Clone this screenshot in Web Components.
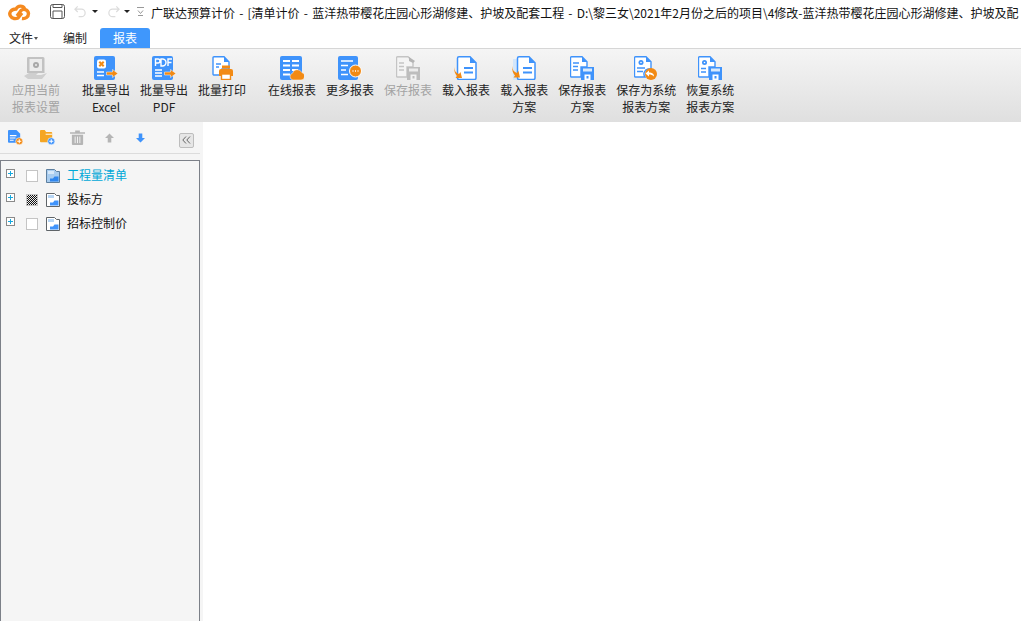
<!DOCTYPE html>
<html>
<head>
<meta charset="utf-8">
<title>广联达预算计价</title>
<style>
  html, body { margin: 0; height: 100%; overflow: hidden; background: #fff; }
  body { font: 12px "Noto Sans CJK SC", "Liberation Sans", sans-serif; color: #222; }
  app-shell { height: 100vh; }
</style>
</head>
<body>
<template id="icons">
  <svg data-name="settings" viewBox="0 0 24 24"><path d="M4 1h15a1.500 1.500 0 0 1 1.500 1.500V17H3V2.500A1.500 1.500 0 0 1 4 1z" fill="#c2c2c2"/><rect x="5.500" y="3" width="12.500" height="12" fill="#ececec"/><circle cx="12" cy="9" r="3" fill="#a8a8a8"/><circle cx="12" cy="9" r="1" fill="#ececec"/><path d="M0 20l5-3h9l-2 2h5l6-2-5 6H4z" fill="#cfcfcf"/></svg>
  <svg data-name="excel" viewBox="0 0 24 24"><rect x="0" y="0" width="21" height="24" rx="2" fill="#3f93fb"/><rect x="3" y="3.500" width="9" height="9" rx="2" fill="#fff"/><path d="M5.300 5.800l4.400 4.400m0-4.400l-4.400 4.400" stroke="#f28a14" stroke-width="2"/><path d="M3 16h7M3 19.500h7" stroke="#fff" stroke-width="1.500"/><path d="M12.500 16h6v-2.500l5.500 4-5.500 4V19h-6z" fill="#f28a14" stroke="#fff" stroke-width=".5"/></svg>
  <svg data-name="pdf" viewBox="0 0 24 24"><rect x="0" y="0" width="21" height="24" rx="2" fill="#3f93fb"/><path d="M3 14h7M3 17h7M3 20h7" stroke="#fff" stroke-width="1.500"/><path d="M3.500 10V3h2.500a1.800 1.800 0 0 1 0 4H3.500M9 3v7h1.500a3 3 0 0 0 0-7zM16 10V3h4M16 6.500h3.500" fill="none" stroke="#fff" stroke-width="1.400"/><path d="M12.500 16h6v-2.500l5.500 4-5.500 4V19h-6z" fill="#f28a14" stroke="#fff" stroke-width=".5"/></svg>
  <svg data-name="print" viewBox="0 0 24 24"><path d="M4 .7h10l5 5.300V13h-7v6H4a1 1 0 0 1-1-1V1.700a1 1 0 0 1 1-1z" fill="#fff" stroke="#3f93fb" stroke-width="1.400"/><path d="M14 .5v5.500h5.500z" fill="#3f93fb"/><path d="M6 8h5M6 11h3" stroke="#3f93fb" stroke-width="1.500"/><rect x="12" y="9.500" width="8" height="3" fill="#f28a14"/><path d="M9 15a2 2 0 0 1 2-2h10a2 2 0 0 1 2 2v5H9z" fill="#f28a14"/><rect x="11.500" y="18" width="9" height="5.500" fill="#fff" stroke="#f28a14" stroke-width="1.400"/></svg>
  <svg data-name="online" viewBox="0 0 24 24"><rect x="0" y="0" width="22" height="24" rx="2" fill="#3f93fb"/><path d="M3 5h7m2 0h7M3 9.500h7m2 0h7M3 14h7m2 0h6M3 18.500h7" stroke="#fff" stroke-width="1.800"/><path d="M13 24a3.500 3.500 0 0 1-.5-6.800 5 5 0 0 1 9.300-.7A3.800 3.800 0 0 1 21 24z" fill="#f28a14" stroke="#fff" stroke-width=".5"/></svg>
  <svg data-name="more" viewBox="0 0 24 24"><rect x="0" y="0" width="20" height="24" rx="2" fill="#3f93fb"/><path d="M3 5h12M3 9.500h7M3 14h5M3 18.500h7" stroke="#fff" stroke-width="1.700"/><circle cx="17.500" cy="15" r="6" fill="#f28a14" stroke="#fff" stroke-width="1"/><path d="M14.500 15h1m1.500 0h1m1.500 0h1" stroke="#fff" stroke-width="1.500"/></svg>
  <svg data-name="savegrey" viewBox="0 0 24 24"><path d="M1.500.7H12l5 5V11h-6v10H1.500a1 1 0 0 1-1-1V1.700a1 1 0 0 1 1-1z" fill="#f4f4f4" stroke="#c4c4c4" stroke-width="1.400"/><path d="M3 7h5M3 10.500h5M3 14h5" stroke="#c4c4c4" stroke-width="1.400"/><path d="M13 1l6 4-2 2-4-2z" fill="#b4b4b4"/><rect x="11" y="11" width="13" height="13" fill="#bdbdbd"/><rect x="13" y="12.500" width="9" height="3" fill="#ececec"/><rect x="14.500" y="18.500" width="6" height="5.500" fill="#f2f2f2"/><rect x="16.500" y="20" width="2" height="2.500" fill="#bdbdbd"/></svg>
  <svg data-name="load" viewBox="0 0 24 24"><path d="M5 .8h11l6 6V22a1.500 1.500 0 0 1-1.500 1.500H5A1.500 1.500 0 0 1 3.500 22V2.300A1.500 1.500 0 0 1 5 .8z" fill="#fff" stroke="#3f93fb" stroke-width="1.500"/><path d="M16 .5v6.500h6.500z" fill="#3f93fb"/><path d="M10 12h9M10 16.500h9" stroke="#3f93fb" stroke-width="1.800"/><path d="M0 11c.5 4 2 6 5 7l1.500-2L8 22H1.500l1.500-2C1 18 0 15 0 11z" fill="#f28a14"/></svg>
  <svg data-name="loadscheme" viewBox="0 0 24 24"><rect x="1" y="3" width="15" height="21" fill="#d3e6fb"/><path d="M7 .8h10l6 6V22a1.500 1.500 0 0 1-1.500 1.500H7A1.500 1.500 0 0 1 5.500 22V2.300A1.500 1.500 0 0 1 7 .8z" fill="#fff" stroke="#3f93fb" stroke-width="1.500"/><path d="M17 .5v6.500h6z" fill="#3f93fb"/><path d="M11 12h9M11 16.500h9" stroke="#3f93fb" stroke-width="1.800"/><path d="M0 10c.5 4 2 6 5 7l1.500-2L8 21.500H1.500l1.500-2C1 17.500 0 14.500 0 10z" fill="#f28a14"/></svg>
  <svg data-name="savescheme" viewBox="0 0 24 24"><path d="M1.500.7H12l5 5V11h-6v10H1.500a1 1 0 0 1-1-1V1.700a1 1 0 0 1 1-1z" fill="#fff" stroke="#3f93fb" stroke-width="1.400"/><path d="M12 .5v5.500h5z" fill="#3f93fb"/><path d="M3 7h6M3 10.500h5M3 14h5" stroke="#3f93fb" stroke-width="1.400"/><rect x="11" y="11" width="13" height="13" fill="#3f93fb"/><rect x="13" y="12.500" width="9" height="3" fill="#d9eafc"/><rect x="14.500" y="18.500" width="6" height="5.500" fill="#fff"/><rect x="16.500" y="20" width="2" height="2.500" fill="#3f93fb"/></svg>
  <svg data-name="savesystem" viewBox="0 0 24 24"><path d="M1.500.7H12l5 5V13h-3a5 5 0 0 0-3 8H1.500a1 1 0 0 1-1-1V1.700a1 1 0 0 1 1-1z" fill="#fff" stroke="#3f93fb" stroke-width="1.400"/><path d="M12 .5v5.500h5z" fill="#3f93fb"/><circle cx="7" cy="6.500" r="2.500" fill="#3f93fb"/><circle cx="7" cy="6.500" r=".8" fill="#fff"/><path d="M3 12h8M3 15.500h6" stroke="#3f93fb" stroke-width="1.300"/><circle cx="17" cy="18" r="6" fill="#f28a14"/><path d="M20 20.500c0-3-2-4-5-4v-2l-3.500 3 3.500 3v-2c2 0 3.500 .5 5 2z" fill="#fff"/></svg>
  <svg data-name="restore" viewBox="0 0 24 24"><path d="M1.500.7H12l5 5V11h-6v10H1.500a1 1 0 0 1-1-1V1.700a1 1 0 0 1 1-1z" fill="#fff" stroke="#3f93fb" stroke-width="1.400"/><path d="M12 .5v5.500h5z" fill="#3f93fb"/><circle cx="6.500" cy="6.500" r="2.500" fill="#3f93fb"/><circle cx="6.500" cy="6.500" r=".8" fill="#fff"/><path d="M3 12.500h5M3 16h5" stroke="#3f93fb" stroke-width="1.300"/><rect x="11" y="11" width="13" height="13" fill="#3f93fb"/><rect x="13" y="12.500" width="9" height="3" fill="#d9eafc"/><rect x="14.500" y="18.500" width="6" height="5.500" fill="#fff"/><rect x="16.500" y="20" width="2" height="2.500" fill="#3f93fb"/></svg>
  <svg data-name="addfile" viewBox="0 0 16 16"><path d="M0 1a1 1 0 0 1 1-1h8l4 4v8.500a1 1 0 0 1-1 1H1a1 1 0 0 1-1-1z" fill="#3f93fb"/><path d="M2 6h7M2 8.500h6M2 11h4" stroke="#fff" stroke-width="1.100"/><circle cx="12" cy="12" r="3.800" fill="#f28a14" stroke="#fff" stroke-width=".6"/><path d="M12 9.800v4.400M9.800 12h4.400" stroke="#fff" stroke-width="1.100"/></svg>
  <svg data-name="addfolder" viewBox="0 0 16 16"><path d="M0 1a1 1 0 0 1 1-1h4l1.500 2H12a1 1 0 0 1 1 1v10H1a1 1 0 0 1-1-1z" fill="#f5a623"/><path d="M6 4.500h7" stroke="#fff" stroke-width="1"/><circle cx="12" cy="12" r="3.800" fill="#3f93fb" stroke="#fff" stroke-width=".6"/><path d="M12 9.800v4.400M9.800 12h4.400" stroke="#fff" stroke-width="1.100"/></svg>
  <svg data-name="trash" viewBox="0 0 16 16"><path d="M0 2.500h16V4H0zM5.500 2.500V.5h5v2z" fill="#b5b5b5"/><path d="M2 5h12v10a1 1 0 0 1-1 1H3a1 1 0 0 1-1-1z" fill="#b5b5b5"/><path d="M5.500 7v7M8 7v7M10.500 7v7" stroke="#f4f4f4" stroke-width="1"/></svg>
  <svg data-name="up" viewBox="0 0 10 10"><path d="M5 0l5 5H7v5H3V5H0z" fill="#b5b5b5"/></svg>
  <svg data-name="down" viewBox="0 0 10 10"><path d="M5 10L0 5h3V0h4v5h3z" fill="#3f93fb"/></svg>
  <svg data-name="node" viewBox="0 0 14 14"><path d="M.5.500h8l2 2h3v11H.5z" fill="#fff" stroke="#5f6468"/><rect x="2" y="2" width="6" height="3" fill="#b7d6f5"/><path d="M4 12.500V9.500h3l1.500-2h4v5z" fill="#3f93fb"/></svg>
  <svg data-name="nodeactive" viewBox="0 0 14 14"><path d="M.5.500h8l2 2h3v11H.5z" fill="#a9cdf0" stroke="#5d7f9f"/><rect x="2" y="2" width="6" height="3" fill="#d6e8f9"/><path d="M4 12.500V9.500h3l1.500-2h4v5z" fill="#2f86ee"/></svg>
</template>

<script>
function iconMarkup(name, size) {
	const tpl = document.getElementById('icons');
	const svg = tpl.content.querySelector(`svg[data-name="${name}"]`).cloneNode(true);
	if (size) {
		svg.setAttribute('width', size[0]);
		svg.setAttribute('height', size[1]);
	}
	return svg.outerHTML;
}

class AppShell extends HTMLElement {
	constructor() {
		super();
		this.attachShadow({ mode: 'open' });
		this.shadowRoot.innerHTML = `
      <style>
        :host { display: flex; flex-direction: column; overflow: hidden; }
        .work { flex: 1; display: flex; min-height: 0; }
        .main { flex: 1; background: #fff; }
      </style>
      <title-bar></title-bar>
      <tab-strip></tab-strip>
      <report-ribbon></report-ribbon>
      <div class="work">
        <side-panel></side-panel>
        <div class="main"></div>
      </div>
    `;
	}
}

class TitleBar extends HTMLElement {
	constructor() {
		super();
		this.attachShadow({ mode: 'open' });
		this.shadowRoot.innerHTML = `
      <style>
        :host { display: flex; align-items: center; height: 26px; background: #fff; overflow: hidden; white-space: nowrap; }
        .logo { width: 23px; height: 17px; margin: 0 0 2px 8px; flex: none; }
        .quick { display: flex; align-items: center; margin: 0 0 3px 19px; flex: none; }
        .quick svg { display: block; flex: none; }
        .caret { width: 0; height: 0; border: 3px solid transparent; border-top: 3px solid #222; border-bottom: 0; flex: none; }
        .title { margin-left: 7px; font-size: 12px; line-height: 26px; color: #111; flex: none; word-spacing: 1.5px; }
      </style>
      <svg class="logo" viewBox="0 0 23 17" fill="none" stroke="#f58a1f" stroke-width="3.400">
        <path d="M16.500 4.500C15 1.500 10 1 8 5 3 5 .5 9 2.500 12 4 15 8 15 10 14l4-5"/>
        <path d="M9 12l4-5.500c2-2 7-1.500 7.500 3 0 3.500-3 5.500-6.500 5"/>
      </svg>
      <div class="quick">
        <svg width="15" height="15" viewBox="0 0 15 15" fill="none" stroke="#555"><path d="M2.500 .5h10a2 2 0 0 1 2 2v10a2 2 0 0 1-2 2h-10a2 2 0 0 1-2-2v-10a2 2 0 0 1 2-2zM3 .5v3h9v-3M3 14.500V7h9v7.500"/></svg>
        <svg style="margin-left:9px" width="13" height="13" viewBox="0 0 14 13" fill="none" stroke="#dcdcdc" stroke-width="1.300"><path d="M4 1L1 4l3 3M1 4h7a4 4 0 0 1 0 8H5"/></svg>
        <span class="caret" style="margin-left:5px"></span>
        <svg style="margin-left:9px" width="13" height="13" viewBox="0 0 14 13" fill="none" stroke="#dcdcdc" stroke-width="1.300"><path d="M10 1l3 3-3 3M13 4H6a4 4 0 0 0 0 8h3"/></svg>
        <span class="caret" style="margin-left:4px"></span>
        <svg style="margin-left:7px" width="7" height="9" viewBox="0 0 7 9" fill="none" stroke="#999"><path d="M0 .5h7M1 3.500l2.500 3 2.500-3M1 8.500h5"/></svg>
      </div>
      <span class="title">广联达预算计价 - [清单计价 - 蓝洋热带樱花庄园心形湖修建、护坡及配套工程 - D:\\黎三女\\2021年2月份之后的项目\\4修改-蓝洋热带樱花庄园心形湖修建、护坡及配</span>
    `;
	}
}

class TabStrip extends HTMLElement {
	constructor() {
		super();
		this.attachShadow({ mode: 'open' });
		this.shadowRoot.innerHTML = `
      <style>
        :host { display: flex; align-items: flex-end; height: 22px; background: #fff; padding-left: 9px; box-sizing: border-box; }
        .tab { height: 20px; line-height: 20px; font-size: 12px; color: #222; }
        .file { display: flex; align-items: center; width: 30px; }
        .file i { width: 0; height: 0; border: 2.500px solid transparent; border-top: 3px solid #555; border-bottom: 0; margin-left: 1px; }
        .edit { margin-left: 24px; width: 24px; }
        .on { margin-left: 13px; width: 50px; text-align: center; background: #3f97fc; color: #fff; border-radius: 3px 3px 0 0; }
      </style>
      <div class="tab file">文件<i></i></div>
      <div class="tab edit">编制</div>
      <div class="tab on">报表</div>
    `;
	}
}

class ReportRibbon extends HTMLElement {
	constructor() {
		super();
		this.attachShadow({ mode: 'open' });
		this.shadowRoot.innerHTML = `
      <style>
        :host { display: flex; height: 74px; padding-left: 7px; box-sizing: border-box; border-top: 1px solid #d6d6d6;
          background: linear-gradient(#f5f5f5, #dfdfdf); }
        .group { display: flex; }
        .group + .group { margin-left: 12px; }
      </style>
      <div class="group">
        <ribbon-button icon="settings" disabled>应用当前<br>报表设置</ribbon-button>
      </div>
      <div class="group">
        <ribbon-button icon="excel">批量导出<br>Excel</ribbon-button>
        <ribbon-button icon="pdf">批量导出<br>PDF</ribbon-button>
        <ribbon-button icon="print">批量打印</ribbon-button>
      </div>
      <div class="group">
        <ribbon-button icon="online">在线报表</ribbon-button>
        <ribbon-button icon="more">更多报表</ribbon-button>
        <ribbon-button icon="savegrey" disabled>保存报表</ribbon-button>
        <ribbon-button icon="load">载入报表</ribbon-button>
        <ribbon-button icon="loadscheme">载入报表<br>方案</ribbon-button>
        <ribbon-button icon="savescheme">保存报表<br>方案</ribbon-button>
        <ribbon-button icon="savesystem">保存为系统<br>报表方案</ribbon-button>
        <ribbon-button icon="restore">恢复系统<br>报表方案</ribbon-button>
      </div>
    `;
	}
}

class RibbonButton extends HTMLElement {
	constructor() {
		super();
		this.attachShadow({ mode: 'open' });
		this.shadowRoot.innerHTML = `
      <style>
        :host { display: flex; flex-direction: column; align-items: center; padding: 7px 5px 0; font-size: 12px; line-height: 17px; color: #222; text-align: center; white-space: nowrap; }
        :host([disabled]) { color: #a3a3a3; }
        .icon { width: 24px; height: 24px; margin-bottom: 1px; }
        .icon svg { display: block; width: 24px; height: 24px; }
      </style>
      <div class="icon">${iconMarkup(this.getAttribute('icon'))}</div>
      <div><slot></slot></div>
    `;
	}
}

class SidePanel extends HTMLElement {
	constructor() {
		super();
		this.attachShadow({ mode: 'open' });
		this.shadowRoot.innerHTML = `
      <style>
        :host { display: flex; flex-direction: column; width: 203px; flex: none; background: #f5f5f5; }
        .tools { display: flex; align-items: center; height: 31px; margin-right: 3px; border-bottom: 1px solid #dcdcdc; flex: none; }
        .tools svg { display: block; flex: none; }
        .collapse { margin: 5px 0 0 34px; width: 13px; height: 13px; border: 1px solid #bdbdbd; border-radius: 2px; background: #e6e6e6; display: flex; align-items: center; justify-content: center; }
        .tree { flex: 1; width: 200px; box-sizing: border-box; border: 1px solid #7c8088; border-bottom: 0; margin-top: 6px; padding-top: 1px; }
      </style>
      <div class="tools">
        <span style="margin-left:8px;width:15px">${iconMarkup('addfile', [15, 15])}</span>
        <span style="margin-left:17px;width:15px">${iconMarkup('addfolder', [15, 15])}</span>
        <span style="margin-left:15px;width:15px">${iconMarkup('trash', [15, 15])}</span>
        <span style="margin-left:20px;width:9px">${iconMarkup('up', [9, 10])}</span>
        <span style="margin-left:22px;width:9px">${iconMarkup('down', [9, 10])}</span>
        <span class="collapse"><svg width="9" height="8" viewBox="0 0 9 8" fill="none" stroke="#666"><path d="M4 .5L.8 4 4 7.500M8 .5L4.800 4 8 7.500"/></svg></span>
      </div>
      <div class="tree">
        <tree-row active>工程量清单</tree-row>
        <tree-row mixed>投标方</tree-row>
        <tree-row>招标控制价</tree-row>
      </div>
    `;
	}
}

class TreeRow extends HTMLElement {
	constructor() {
		super();
		this.attachShadow({ mode: 'open' });
		const active = this.hasAttribute('active');
		this.shadowRoot.innerHTML = `
      <style>
        :host { display: flex; align-items: center; height: 24px; font-size: 12px; color: #111; }
        :host([active]) { color: #00a8d8; }
        .exp { width: 7px; height: 7px; border: 1px solid #8a8a8a; margin: -1px 0 0 5px; position: relative; background: #fff; flex: none; }
        .exp::before { content: ""; position: absolute; left: 1px; right: 1px; top: 3px; height: 1px; background: #16a8de; }
        .exp::after { content: ""; position: absolute; top: 1px; bottom: 1px; left: 3px; width: 1px; background: #16a8de; }
        .check { width: 10px; height: 10px; border: 1px solid #c4c4c4; background: #fff; margin: 4px 0 0 11px; flex: none; }
        :host([mixed]) .check { background: repeating-conic-gradient(#111 0 25%, #eee 0 50%) 0 0 / 2px 2px; }
        .node { margin: 3px 0 0 8px; width: 14px; height: 14px; flex: none; }
        .node svg { display: block; width: 14px; height: 14px; }
        .label { margin-left: 7px; }
      </style>
      <span class="exp"></span>
      <span class="check"></span>
      <span class="node">${iconMarkup(active ? 'nodeactive' : 'node')}</span>
      <span class="label"><slot></slot></span>
    `;
	}
}

customElements.define('ribbon-button', RibbonButton);
customElements.define('tree-row', TreeRow);
customElements.define('report-ribbon', ReportRibbon);
customElements.define('side-panel', SidePanel);
customElements.define('title-bar', TitleBar);
customElements.define('tab-strip', TabStrip);
customElements.define('app-shell', AppShell);
</script>
<app-shell></app-shell>
</body>
</html>
